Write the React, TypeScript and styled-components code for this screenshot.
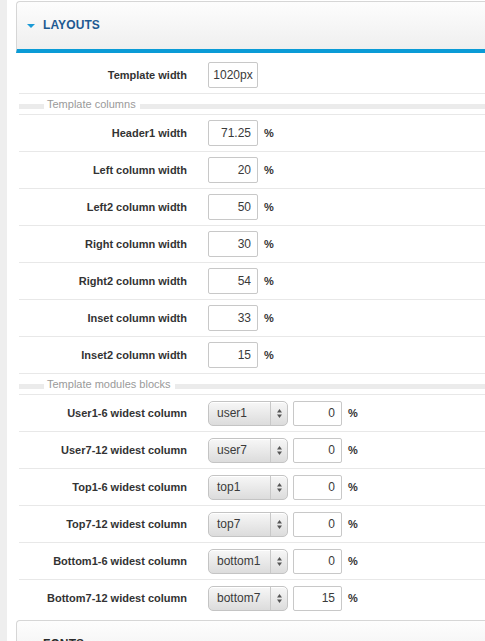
import React from 'react';
import styled, { createGlobalStyle } from 'styled-components';

const GlobalStyle = createGlobalStyle`
  html, body {
    margin: 0;
    padding: 0;
    background: #fff;
    overflow: hidden;
  }
  body {
    font-family: "Liberation Sans", Arial, sans-serif;
    color: #333;
  }
`;

const Shell = styled.div`
  display: flex;
  min-height: 100vh;
`;

const SideStrip = styled.div`
  width: 7px;
  flex: none;
  background: #eeeeee;
`;

const Main = styled.div`
  flex: none;
  width: 560px;
  padding: 1px 0 0 9px;
`;

const Panel = styled.section`
  & + & {
    margin-top: 4px;
  }
`;

const PanelHeader = styled.div<{ $open?: boolean }>`
  display: flex;
  align-items: center;
  gap: 8px;
  height: 47px;
  padding: 0 0 1px 10px;
  box-sizing: border-box;
  border: 1px solid #d6d6d6;
  border-right: none;
  border-bottom: ${({ $open }) => ($open ? '4px solid #0a9bd6' : 'none')};
  border-radius: 4px 0 0 0;
  background: linear-gradient(#fdfdfd, #efefef);
  ${({ $open }) => ($open ? 'height: 52px;' : 'height: 48px;')}
`;

const Caret = styled.span<{ $open?: boolean }>`
  width: 0;
  height: 0;
  border-left: 4px solid transparent;
  border-right: 4px solid transparent;
  border-top: 4px solid #1a9ad6;
  margin-top: 1px;
  visibility: ${({ $open }) => ($open ? 'visible' : 'hidden')};
`;

const PanelTitle = styled.h2<{ $open?: boolean }>`
  margin: 0;
  font-size: 12px;
  font-weight: bold;
  letter-spacing: 0.1px;
  color: ${({ $open }) => ($open ? '#1d5a92' : '#2b2b2b')};
`;

const PanelBody = styled.div`
  padding-left: 3px;
`;

const Row = styled.div<{ $first?: boolean; $last?: boolean }>`
  display: grid;
  grid-template-columns: 168px auto;
  column-gap: 21px;
  align-items: center;
  padding: ${({ $first }) => ($first ? '9px 0 5px' : '5px 0')};
  border-bottom: ${({ $last }) => ($last ? 'none' : '1px solid #e8e8e8')};
`;

const Label = styled.label`
  text-align: right;
  font-size: 11px;
  font-weight: bold;
  color: #333;
`;

const Controls = styled.div`
  display: flex;
  align-items: center;
  gap: 5px;
  min-height: 26px;
`;

const TextBox = styled.div<{ $tall?: boolean; $align?: string }>`
  box-sizing: border-box;
  width: ${({ $tall }) => ($tall ? '50px' : '49px')};
  height: ${({ $tall }) => ($tall ? '26px' : '25px')};
  display: flex;
  align-items: center;
  justify-content: ${({ $align }) => ($align === 'left' ? 'center' : 'flex-end')};
  padding: 0 6px;
  border: 1px solid #c8c8c8;
  border-radius: 2px;
  background: #fff;
  font-size: 12px;
  color: #3a3a3a;
`;

const Unit = styled.span`
  font-size: 11px;
  font-weight: bold;
  color: #333;
  margin-left: 1px;
`;

const Select = styled.div`
  box-sizing: border-box;
  width: 80px;
  height: 25px;
  display: flex;
  align-items: stretch;
  border: 1px solid #c4c4c4;
  border-radius: 5px;
  background: linear-gradient(#f7f7f7, #dcdcdc);
  box-shadow: inset 0 1px 0 #fff;
`;

const SelectValue = styled.span`
  flex: 1;
  display: flex;
  align-items: center;
  padding-left: 8px;
  font-size: 12px;
  color: #3a3a3a;
`;

const SelectArrows = styled.span`
  width: 16px;
  display: flex;
  align-items: center;
  justify-content: center;
  border-left: 1px solid #c8c8c8;
`;

const Legend = styled.div`
  display: flex;
  align-items: center;
  height: 20px;
  border-bottom: 1px solid #e8e8e8;
`;

const LegendBand = styled.span<{ $grow?: boolean }>`
  flex: ${({ $grow }) => ($grow ? '1' : 'none')};
  width: ${({ $grow }) => ($grow ? 'auto' : '25px')};
  height: 5px;
  margin-top: 4px;
  background: #ebebeb;
`;

const LegendText = styled.span`
  padding: 0 4px 0 3px;
  font-size: 11px;
  color: #9a9a9a;
  line-height: 11px;
`;

const columns = [
  { label: 'Header1 width', value: '71.25' },
  { label: 'Left column width', value: '20' },
  { label: 'Left2 column width', value: '50' },
  { label: 'Right column width', value: '30' },
  { label: 'Right2 column width', value: '54' },
  { label: 'Inset column width', value: '33' },
  { label: 'Inset2 column width', value: '15' },
];

const modules = [
  { label: 'User1-6 widest column', pick: 'user1', value: '0' },
  { label: 'User7-12 widest column', pick: 'user7', value: '0' },
  { label: 'Top1-6 widest column', pick: 'top1', value: '0' },
  { label: 'Top7-12 widest column', pick: 'top7', value: '0' },
  { label: 'Bottom1-6 widest column', pick: 'bottom1', value: '0' },
  { label: 'Bottom7-12 widest column', pick: 'bottom7', value: '15' },
];

const Arrows = () => (
  <svg width="5" height="9" viewBox="0 0 5 9">
    <path d="M2.5 0 L5 3.5 H0 Z" fill="#555" />
    <path d="M2.5 9 L5 5.5 H0 Z" fill="#555" />
  </svg>
);

const SectionLegend = ({ title }: { title: string }) => (
  <Legend>
    <LegendBand />
    <LegendText>{title}</LegendText>
    <LegendBand $grow />
  </Legend>
);

const App = () => (
  <>
    <GlobalStyle />
    <Shell>
      <SideStrip />
      <Main>
        <Panel>
          <PanelHeader $open>
            <Caret $open />
            <PanelTitle $open>LAYOUTS</PanelTitle>
          </PanelHeader>
          <PanelBody>
            <Row $first>
              <Label>Template width</Label>
              <Controls>
                <TextBox $tall $align="left">1020px</TextBox>
              </Controls>
            </Row>
            <SectionLegend title="Template columns" />
            {columns.map(({ label, value }) => (
              <Row key={label}>
                <Label>{label}</Label>
                <Controls>
                  <TextBox $tall>{value}</TextBox>
                  <Unit>%</Unit>
                </Controls>
              </Row>
            ))}
            <SectionLegend title="Template modules blocks" />
            {modules.map(({ label, pick, value }, i) => (
              <Row key={label} $last={i === modules.length - 1}>
                <Label>{label}</Label>
                <Controls>
                  <Select>
                    <SelectValue>{pick}</SelectValue>
                    <SelectArrows>
                      <Arrows />
                    </SelectArrows>
                  </Select>
                  <TextBox>{value}</TextBox>
                  <Unit>%</Unit>
                </Controls>
              </Row>
            ))}
          </PanelBody>
        </Panel>
        <Panel>
          <PanelHeader>
            <Caret />
            <PanelTitle>FONTS</PanelTitle>
          </PanelHeader>
        </Panel>
      </Main>
    </Shell>
  </>
);

export default App;
